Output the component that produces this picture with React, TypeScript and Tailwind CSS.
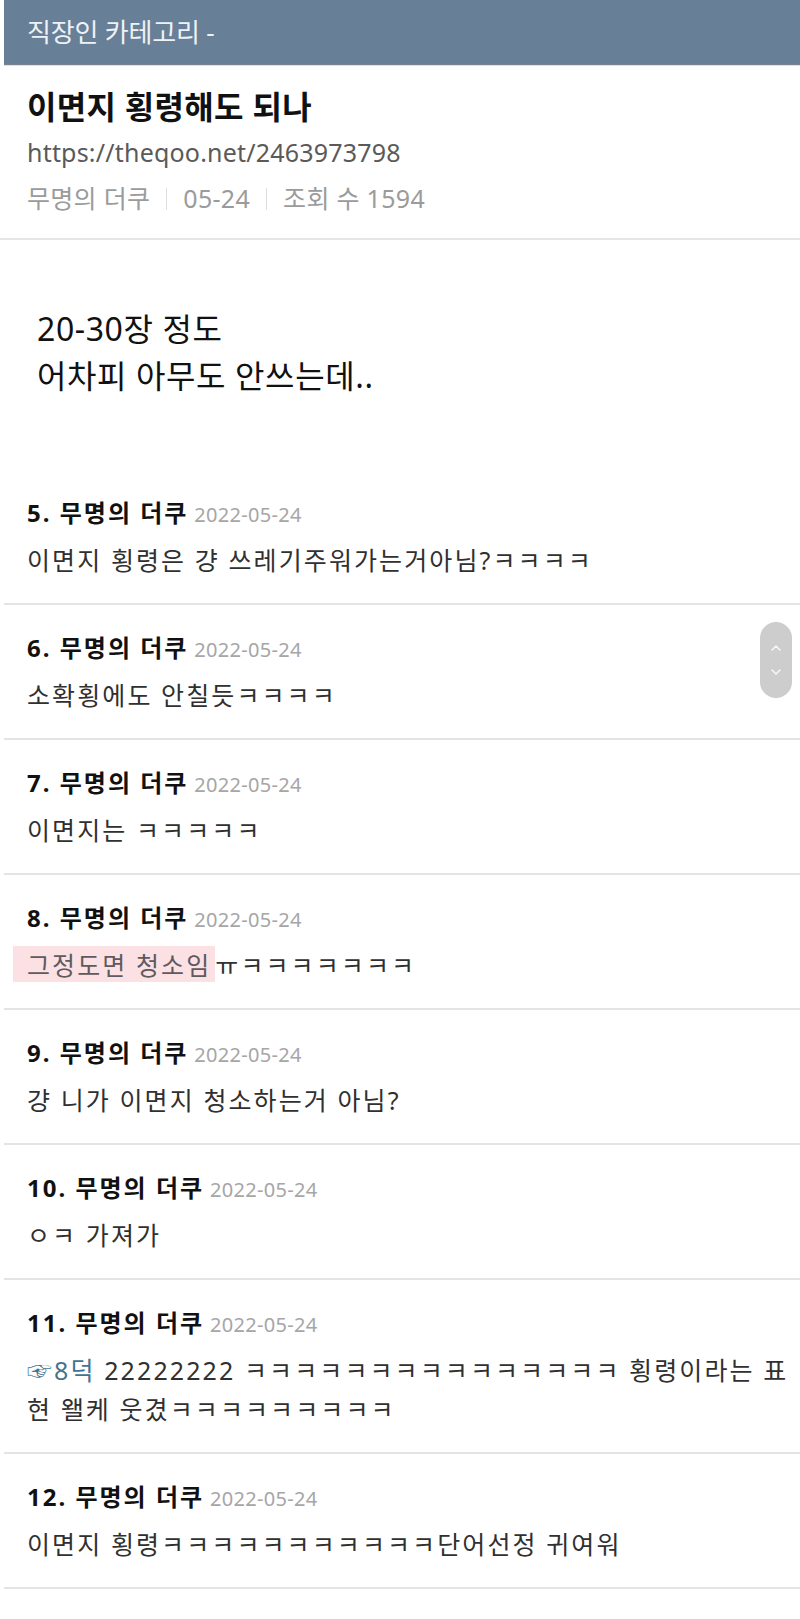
import React from "react";
import { ChevronUp, ChevronDown } from "lucide-react";

type Comment = {
  no: number;
  date: string;
  body: React.ReactNode;
};

const comments: Comment[] = [
  { no: 5, date: "2022-05-24", body: "이면지 횡령은 걍 쓰레기주워가는거아님?ㅋㅋㅋㅋ" },
  { no: 6, date: "2022-05-24", body: "소확횡에도 안칠듯ㅋㅋㅋㅋ" },
  { no: 7, date: "2022-05-24", body: "이면지는 ㅋㅋㅋㅋㅋ" },
  {
    no: 8,
    date: "2022-05-24",
    body: (
      <>
        <span className="bg-[#fbe1e4] text-[#5f5a5e] -ml-[14px] pl-[14px] pr-[4px] pt-[2px]">그정도면 청소임</span>
        ㅠㅋㅋㅋㅋㅋㅋㅋ
      </>
    ),
  },
  { no: 9, date: "2022-05-24", body: "걍 니가 이면지 청소하는거 아님?" },
  { no: 10, date: "2022-05-24", body: "ㅇㅋ 가져가" },
  {
    no: 11,
    date: "2022-05-24",
    body: (
      <>
        <span className="text-[#3f7490]">☞8덕</span> 22222222 ㅋㅋㅋㅋㅋㅋㅋㅋㅋㅋㅋㅋㅋㅋㅋ 횡령이라는 표현 왤케 웃겼ㅋㅋㅋㅋㅋㅋㅋㅋㅋ
      </>
    ),
  },
  { no: 12, date: "2022-05-24", body: "이면지 횡령ㅋㅋㅋㅋㅋㅋㅋㅋㅋㅋㅋ단어선정 귀여워" },
];

function CommentItem({ c }: { c: Comment }) {
  return (
    <div className="ml-[4px] border-b-2 border-[#e4e4e4] pl-[23px] pr-[2px] pt-[23px] pb-[23px]">
      <div className="flex items-baseline h-[40px] leading-[40px]">
        <span className="text-[24px] font-bold text-[#111] tracking-[2px]">
          {c.no}. 무명의 더쿠
        </span>
        <span className="ml-[6px] text-[20px] text-[#a6a6a6] font-['Noto_Sans',sans-serif] tracking-[0.3px]">
          {c.date}
        </span>
      </div>
      <div className="mt-[8px] text-[25px] leading-[39px] text-[#303030] tracking-[2.1px] break-all">{c.body}</div>
    </div>
  );
}

export default function App() {
  return (
    <div className="relative w-[800px] min-h-[1619px] bg-white font-['Noto_Sans','Noto_Sans_CJK_KR',sans-serif]">
      {/* category bar */}
      <div className="ml-[4px] h-[65px] bg-[#687f98] border-b border-[#7a8392] flex items-center pl-[23px]">
        <span className="text-[26px] text-[#eef2f6] tracking-[-0.2px]">직장인 카테고리 -</span>
      </div>
      <div className="ml-[4px] h-px bg-[#d3e2ec]" />

      {/* post header */}
      <div className="pl-[27px] pt-[19px] pb-[15px] border-b-2 border-[#e6e6e6]">
        <h1 className="text-[32px] font-bold leading-[44px] text-[#111] tracking-[0.3px]">이면지 횡령해도 되나</h1>
        <div className="text-[25px] leading-[46px] text-[#5a5a5a] tracking-[0.2px]">https://theqoo.net/2463973798</div>
        <div className="flex items-center h-[48px] text-[25px] text-[#9b9b9b] tracking-[0.3px]">
          <span>무명의 더쿠</span>
          <span className="mx-[16px] w-px h-[22px] bg-[#dedede]" />
          <span>05-24</span>
          <span className="mx-[16px] w-px h-[22px] bg-[#dedede]" />
          <span>조회 수 1594</span>
        </div>
      </div>

      {/* post body */}
      <div className="pl-[37px] pt-[65px] pb-[71px] text-[32px] leading-[47px] text-[#111] tracking-[0.6px]">
        <p>20-30장 정도</p>
        <p>어차피 아무도 안쓰는데..</p>
      </div>

      {/* comments */}
      <div>
        {comments.map((c) => (
          <CommentItem key={c.no} c={c} />
        ))}
      </div>

      {/* floating scroll control */}
      <div className="absolute left-[760px] top-[622px] w-[32px] h-[76px] rounded-full bg-[#cdcdcd] flex flex-col items-center justify-center gap-[8px]">
        <ChevronUp size={16} strokeWidth={2.4} className="text-[#f6f6f6]" />
        <ChevronDown size={16} strokeWidth={2.4} className="text-[#f6f6f6]" />
      </div>
    </div>
  );
}
